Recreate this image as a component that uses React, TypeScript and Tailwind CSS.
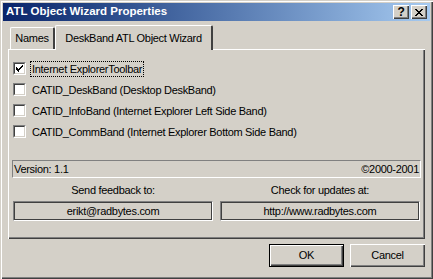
import React from "react";

const raised =
  "shadow-[inset_1px_1px_#ffffff,inset_-1px_-1px_#404040,inset_-2px_-2px_#808080]";

function CheckBox({ checked }: { checked?: boolean }) {
  return (
    <div className="w-[13px] h-[13px] shrink-0 border border-t-[#808080] border-l-[#808080] border-b-white border-r-white">
      <div className="w-full h-full bg-white border border-t-[#404040] border-l-[#404040] border-b-[#d4d0c8] border-r-[#d4d0c8] flex items-center justify-center">
        {checked && (
          <svg width="7" height="7" viewBox="0 0 7 7" shapeRendering="crispEdges">
            <path d="M0 2h1v1H0zM0 3h2v1H0zM0 4h3v1H0zM1 5h2v1H1zM2 6h1v1H2zM2 4h1v1H2zM3 3h1v2H3zM4 2h1v2H4zM5 1h1v2H5zM6 0h1v2H6z" fill="#000" />
          </svg>
        )}
      </div>
    </div>
  );
}

function Row({ label, checked, focused }: { label: string; checked?: boolean; focused?: boolean }) {
  return (
    <div className="h-[21px] flex items-center pl-[4px]">
      <CheckBox checked={checked} />
      <span
        className={
          "ml-[4px] px-[1px] leading-[14px] border border-dotted " +
          (focused ? "border-black" : "border-transparent")
        }
      >
        {label}
      </span>
    </div>
  );
}

export default function App() {
  return (
    <div
      className="w-[433px] h-[279px] bg-[#d4d0c8] p-[3px] flex flex-col text-[11px] tracking-[-0.3px] text-black shadow-[inset_1px_1px_#d4d0c8,inset_2px_2px_#ffffff,inset_-1px_-1px_#404040,inset_-2px_-2px_#808080]"
      style={{ fontFamily: '"Liberation Sans", Arial, sans-serif' }}
    >
      {/* title bar */}
      <div className="h-[18px] flex items-center justify-between pl-[3px] pr-[3px] bg-gradient-to-r from-[#0a246a] to-[#a6caf0]">
        <span className="text-white font-bold text-[11.5px] tracking-[0px]">ATL Object Wizard Properties</span>
        <div className="flex items-center">
          <div className={"w-[16px] h-[14px] bg-[#d4d0c8] flex items-center justify-center font-bold text-[12px] leading-none " + raised}>
            ?
          </div>
          <div className={"ml-[2px] w-[16px] h-[14px] bg-[#d4d0c8] flex items-center justify-center " + raised}>
            <svg width="8" height="7" viewBox="0 0 8 7" shapeRendering="crispEdges">
              <path d="M0 0h2v1H0zM6 0h2v1H6zM1 1h2v1H1zM5 1h2v1H5zM2 2h4v1H2zM3 3h2v1H3zM2 4h4v1H2zM1 5h2v1H1zM5 5h2v1H5zM0 6h2v1H0zM6 6h2v1H6z" fill="#000" />
            </svg>
          </div>
        </div>
      </div>

      <div className="px-[5px] pt-[4px] flex flex-col">
        {/* tabs */}
        <div className="h-[24px] flex items-end pl-[2px] relative z-10">
          <div className="h-[22px] w-[45px] flex items-center justify-center border-l border-t border-white border-r-2 border-r-[#404040] rounded-t-[2px] pb-[1px]">
            Names
          </div>
          <div className="h-[25px] -mb-[1px] w-[158px] bg-[#d4d0c8] flex items-start justify-center pt-[4px] border-l border-t border-white border-r-2 border-r-[#404040] rounded-t-[2px]">
            DeskBand ATL Object Wizard
          </div>
        </div>

        {/* panel */}
        <div className="h-[190px] border-t border-l border-white shadow-[inset_-1px_-1px_#404040,inset_-2px_-2px_#808080] pt-[8px] flex flex-col">
          <Row label="Internet ExplorerToolbar" checked focused />
          <Row label="CATID_DeskBand (Desktop DeskBand)" />
          <Row label="CATID_InfoBand (Internet Explorer Left Side Band)" />
          <Row label="CATID_CommBand (Internet Explorer Bottom Side Band)" />

          <div className="mt-[18px] ml-[3px] mr-[4px] h-[18px] flex items-center justify-between px-[1px] border border-t-[#808080] border-l-[#808080] border-b-white border-r-white">
            <span>Version: 1.1</span>
            <span>©2000-2001</span>
          </div>

          <div className="flex ml-[4px] mr-[5px] gap-[7px] mt-[2px]">
            <div className="flex flex-col w-[200px]">
              <div className="h-[21px] flex items-center justify-center">Send feedback to:</div>
              <div className="h-[20px] border border-t-[#808080] border-l-[#808080] border-b-white border-r-white">
                <div className="h-full border border-[#404040] flex items-center justify-center">erikt@radbytes.com</div>
              </div>
            </div>
            <div className="flex flex-col flex-1">
              <div className="h-[21px] flex items-center justify-center">Check for updates at:</div>
              <div className="h-[20px] border border-t-[#808080] border-l-[#808080] border-b-white border-r-white">
                <div className="h-full border border-[#404040] flex items-center justify-center">http://www.radbytes.com</div>
              </div>
            </div>
          </div>
        </div>

        {/* dialog buttons */}
        <div className="flex justify-end gap-[6px] mt-[5px]">
          <div className="w-[75px] h-[23px] border border-black">
            <div className={"h-full flex items-center justify-center " + raised}>OK</div>
          </div>
          <div className={"w-[75px] h-[23px] flex items-center justify-center " + raised}>Cancel</div>
        </div>
      </div>
    </div>
  );
}
